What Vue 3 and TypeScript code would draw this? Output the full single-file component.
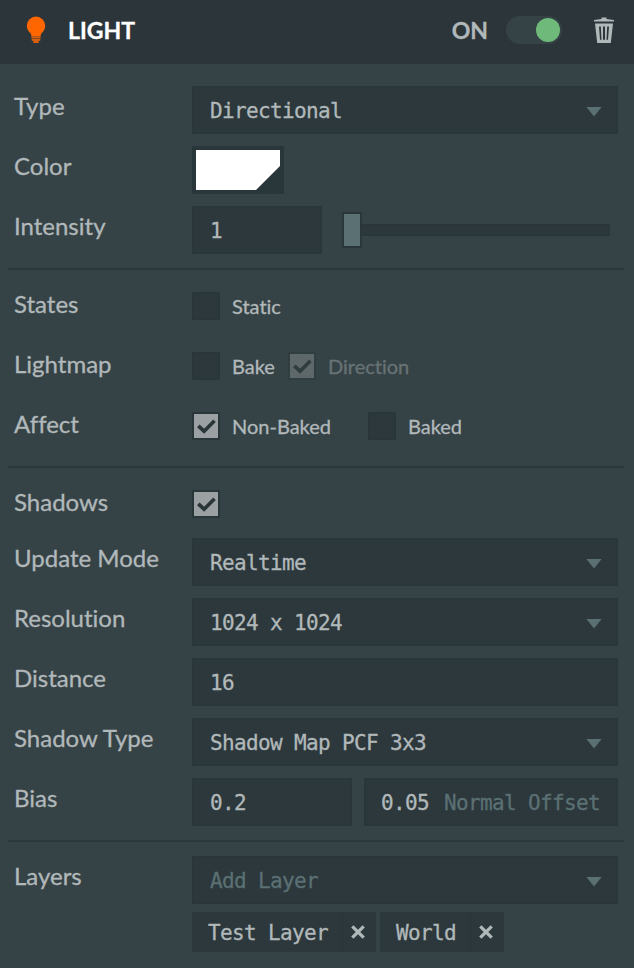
<script setup lang="ts">
import { ref } from 'vue'

interface Check {
  text: string
  on: boolean
  disabled?: boolean
  width: number
}
interface CheckRow {
  label: string
  checks: Check[]
}

const stateRows = ref<CheckRow[]>([
  { label: 'States', checks: [{ text: 'Static', on: false, width: 100 }] },
  {
    label: 'Lightmap',
    checks: [
      { text: 'Bake', on: false, width: 96 },
      { text: 'Direction', on: true, disabled: true, width: 130 },
    ],
  },
  {
    label: 'Affect',
    checks: [
      { text: 'Non-Baked', on: true, width: 176 },
      { text: 'Baked', on: false, width: 110 },
    ],
  },
])

const shadowRows = [
  { label: 'Update Mode', value: 'Realtime', select: true },
  { label: 'Resolution', value: '1024 x 1024', select: true },
  { label: 'Distance', value: '16', select: false },
  { label: 'Shadow Type', value: 'Shadow Map PCF 3x3', select: true },
]

const shadows = ref(true)
const layers = ref(['Test Layer', 'World'])

function removeLayer(name: string) {
  layers.value = layers.value.filter((l) => l !== name)
}
</script>

<template>
  <div class="panel">
    <header class="header">
      <svg class="bulb" viewBox="0 0 20 28">
        <path d="M10 0.5a9.2 9.2 0 0 0-9.2 9.2c0 3.6 2 5.600 3.500 7.600.9 1.200 1.100 2 1.100 3.200h9.200c0-1.200.2-2 1.100-3.200 1.500-2 3.500-4 3.500-7.600A9.200 9.200 0 0 0 10 .5z" />
        <path class="base" d="M5.400 20.500h9.200v2H5.400zM5.600 23h8.800v1.500l-1.700.6v1.900H7.300v-1.900l-1.700-.6z" />
      </svg>
      <span class="title">LIGHT</span>
      <span class="on">ON</span>
      <span class="toggle"><span class="knob"></span></span>
      <svg class="trash" viewBox="0 0 20 26">
        <path d="M0 3l7.500-1V.5h5V2l7.500 1v1.500H0z" />
        <path fill-rule="evenodd" d="M1 6.500h18L16.800 26H3.200zM5 9.500l1 13.300h1.500L6.800 9.500zm4 0v13.300h2V9.500zm4.200 0l-.7 13.300H14l1-13.300z" />
      </svg>
    </header>

    <section class="section first">
      <div class="row">
        <span class="label">Type</span>
        <div class="field grow">Directional<i class="arrow"></i></div>
      </div>
      <div class="row">
        <span class="label">Color</span>
        <div class="swatch"><div class="swatch-fill"></div></div>
      </div>
      <div class="row">
        <span class="label">Intensity</span>
        <div class="field intensity">1</div>
        <div class="slider"><div class="thumb"></div><div class="track"></div></div>
      </div>
    </section>

    <section class="section states">
      <div v-for="row in stateRows" :key="row.label" class="row check-row">
        <span class="label">{{ row.label }}</span>
        <div
          v-for="c in row.checks"
          :key="c.text"
          class="check"
          :class="{ disabled: c.disabled }"
          :style="{ width: c.width + 'px' }"
        >
          <span class="box" :class="{ checked: c.on }" @click="c.on = !c.on">
            <svg v-if="c.on" viewBox="0 0 24 24"><path d="M4.300 11.800l5.800 5.400L20.500 6.700" /></svg>
          </span>
          <span class="check-text">{{ c.text }}</span>
        </div>
      </div>
    </section>

    <section class="section shadow">
      <div class="row check-row">
        <span class="label">Shadows</span>
        <span class="box" :class="{ checked: shadows }" @click="shadows = !shadows">
          <svg v-if="shadows" viewBox="0 0 24 24"><path d="M4.300 11.800l5.800 5.400L20.500 6.700" /></svg>
        </span>
      </div>
      <div v-for="row in shadowRows" :key="row.label" class="row">
        <span class="label">{{ row.label }}</span>
        <div class="field grow">{{ row.value }}<i v-if="row.select" class="arrow"></i></div>
      </div>
      <div class="row">
        <span class="label">Bias</span>
        <div class="field bias">0.2</div>
        <div class="field offset grow">0.05<span class="hint">Normal Offset</span></div>
      </div>
    </section>

    <section class="section layers">
      <div class="row">
        <span class="label">Layers</span>
        <div class="field grow placeholder">Add Layer<i class="arrow"></i></div>
      </div>
      <div class="tags">
        <div v-for="name in layers" :key="name" class="tag">
          <span class="tag-name">{{ name }}</span>
          <span class="tag-close" @click="removeLayer(name)">
            <svg viewBox="0 0 14 14"><path d="M1.300 1.300l11.400 11.400M12.700 1.300L1.300 12.700" /></svg>
          </span>
        </div>
      </div>
    </section>
  </div>
</template>

<style>
body {
  background: #364346;
}
</style>

<style scoped>
* {
  box-sizing: border-box;
}
.panel {
  width: 634px;
  height: 968px;
  overflow: hidden;
  background: #364346;
  color: #b1b8ba;
  font-family: Lato, sans-serif;
  font-variant-ligatures: none;
  -webkit-text-stroke-width: 0.3px;
}
.header {
  display: flex;
  align-items: center;
  height: 64px;
  padding: 0 20px 4px 26px;
  background: #2c3539;
  font-size: 23px;
  font-weight: 700;
}
.bulb {
  width: 20px;
  height: 28px;
  fill: #ff6600;
}
.bulb .base {
  fill: #d95f0e;
}
.title {
  margin-left: 22px;
  color: #fff;
}
.on {
  margin-left: auto;
}
.toggle {
  display: flex;
  justify-content: flex-end;
  width: 56px;
  height: 28px;
  margin-left: 18px;
  padding: 2px;
  border-radius: 14px;
  background: #364346;
}
.knob {
  width: 24px;
  height: 24px;
  border-radius: 50%;
  background: #6fba7b;
}
.trash {
  width: 20px;
  height: 26px;
  margin-left: 32px;
  fill: #b1b8ba;
}
.section {
  display: flex;
  flex-direction: column;
  gap: 12px;
  margin: 0 10px 0 8px;
  padding: 0 6px 0 6px;
  border-bottom: 2px solid #2c383c;
}
.first {
  padding-top: 22px;
  height: 206px;
}
.states {
  gap: 32px;
  padding-top: 22px;
  height: 198px;
}
.shadow {
  padding-top: 22px;
  height: 374px;
}
.shadow .check-row {
  margin-bottom: 8px;
}
.layers {
  gap: 8px;
  padding-top: 14px;
  border-bottom: 0;
}
.row {
  display: flex;
  height: 48px;
}
.check-row {
  height: 28px;
}
.label {
  flex: none;
  width: 178px;
  font-size: 24px;
  line-height: 40px;
  white-space: nowrap;
}
.check-row .label {
  line-height: 24px;
}
.field {
  display: flex;
  height: 48px;
  padding: 0 14px 0 16px;
  border: 2px solid #29363a;
  background: #2c383c;
  font-family: 'DejaVu Sans Mono', monospace;
  font-size: 21px;
  line-height: 46px;
  letter-spacing: -0.64px;
  white-space: pre;
}
.grow {
  flex: 1;
}
.placeholder {
  color: #5b7073;
}
.arrow {
  width: 16px;
  height: 10px;
  margin: 18.500px 0 0 auto;
  background: #5b7073;
  clip-path: polygon(0 0, 100% 0, 50% 100%);
}
.swatch {
  width: 92px;
  height: 48px;
  padding: 4px;
  background: #29363a;
}
.swatch-fill {
  width: 84px;
  height: 40px;
  background: #fff;
  clip-path: polygon(0 0, 100% 0, 100% 16px, 60px 100%, 0 100%);
}
.intensity {
  width: 130px;
}
.slider {
  display: flex;
  align-items: center;
  width: 268px;
  height: 48px;
  margin-left: 20px;
}
.thumb {
  width: 20px;
  height: 36px;
  border: 2px solid #29363a;
  background: #5b7073;
}
.track {
  flex: 1;
  height: 12px;
  border: 2px solid #29363a;
  border-left: 0;
  background: #2c383c;
}
.check {
  display: flex;
  height: 28px;
}
.box {
  flex: none;
  width: 28px;
  height: 28px;
  border: 2px solid #29363a;
  background: #2c383c;
}
.box.checked {
  background: #9ba1a3;
}
.box svg {
  display: block;
  width: 24px;
  height: 24px;
  fill: none;
  stroke: #293538;
  stroke-width: 3.7;
}
.check-text {
  margin-left: 12px;
  font-size: 20px;
  line-height: 29px;
  white-space: nowrap;
}
.disabled {
  opacity: 0.4;
}
.bias {
  width: 160px;
}
.offset {
  margin-left: 12px;
  padding: 0 16px 0 15px;
}
.hint {
  margin-left: auto;
  color: #5b7073;
}
.tags {
  display: flex;
  gap: 4px;
  padding-left: 178px;
}
.tag {
  display: flex;
  height: 40px;
  background: #2c383c;
  font-family: 'DejaVu Sans Mono', monospace;
  font-size: 21px;
  line-height: 42px;
  letter-spacing: -0.64px;
}
.tag-name {
  padding: 0 13px 0 16px;
  white-space: pre;
}
.tag-close {
  display: flex;
  align-items: center;
  width: 35px;
  padding-left: 8px;
  border-left: 2px solid #29363a;
}
.tag-close svg {
  width: 14px;
  height: 14px;
  fill: none;
  stroke: #b1b8ba;
  stroke-width: 3.2;
}
</style>
